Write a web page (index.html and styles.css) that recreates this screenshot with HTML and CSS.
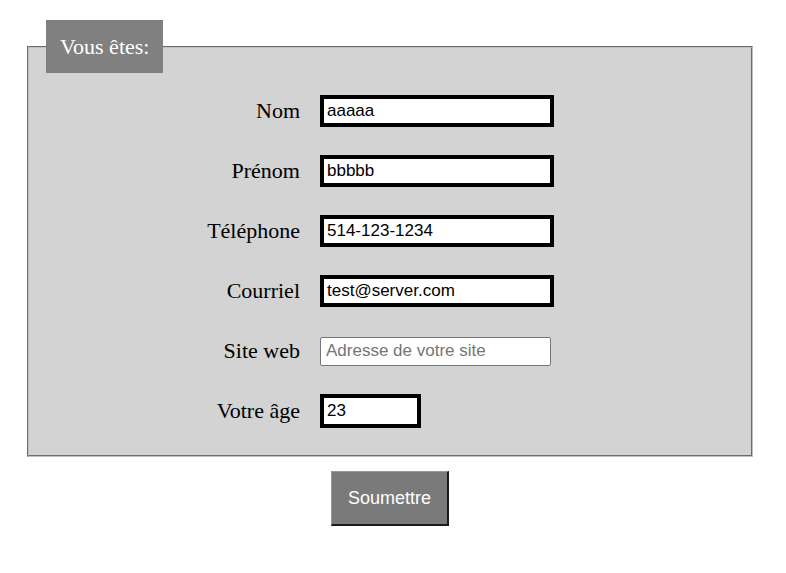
FILE: index.html
```html
<!DOCTYPE html>
<html lang="fr">
<head>
<meta charset="utf-8">
<title>Formulaire</title>
<link rel="stylesheet" href="styles.css">
</head>
<body>
<form class="form">
  <fieldset class="box">
    <legend class="legend">Vous êtes:</legend>
    <div class="grid">
      <label class="lbl" for="nom">Nom</label>
      <input class="field" id="nom" type="text" value="aaaaa">
      <label class="lbl" for="prenom">Prénom</label>
      <input class="field" id="prenom" type="text" value="bbbbb">
      <label class="lbl" for="tel">Téléphone</label>
      <input class="field" id="tel" type="text" value="514-123-1234">
      <label class="lbl" for="mail">Courriel</label>
      <input class="field" id="mail" type="text" value="test@server.com">
      <label class="lbl" for="site">Site web</label>
      <input class="field plain" id="site" type="text" placeholder="Adresse de votre site">
      <label class="lbl" for="age">Votre âge</label>
      <input class="field age" id="age" type="text" value="23">
    </div>
  </fieldset>
  <div class="actions">
    <button class="submit" type="button">Soumettre</button>
  </div>
</form>
</body>
</html>
```
FILE: styles.css
```css
body {
  margin: 8px;
  background: #ffffff;
  font-family: "Liberation Serif", "Times New Roman", serif;
}
.form {
  margin: 12px 0 0 19px;
  width: 726px;
}
.box {
  box-sizing: border-box;
  width: 726px;
  margin: 0;
  padding: 22px 0 28px 17px;
  background: #d3d3d3;
  border: 2px groove #c0c0c0;
}
.legend {
  background: #808080;
  color: #ffffff;
  font-size: 22px;
  line-height: 25px;
  padding: 14px 14px;
}
.grid {
  display: grid;
  grid-template-columns: 254px auto;
  grid-auto-rows: 32px;
  column-gap: 20px;
  row-gap: 28px;
  align-items: center;
  justify-items: start;
}
.lbl {
  justify-self: end;
  font-size: 22px;
  color: #000;
}
.field {
  box-sizing: border-box;
  width: 234px;
  height: 32px;
  border: 4px solid #000;
  padding: 0 3px;
  margin: 0;
  background: #fff;
  color: #000;
  font-family: "Liberation Sans", Arial, sans-serif;
  font-size: 17px;
  outline: none;
}
.plain {
  width: 231px;
  height: 29px;
  border: 1px solid #767676;
  border-radius: 2px;
  padding: 0 5px;
}
.plain::placeholder {
  color: #757575;
}
.age {
  width: 101px;
  height: 34px;
}
.actions {
  display: flex;
  justify-content: center;
  padding-top: 14px;
}
.submit {
  box-sizing: border-box;
  width: 118px;
  height: 55px;
  background: #7a7a7a;
  color: #ffffff;
  font-family: "Liberation Sans", Arial, sans-serif;
  font-size: 18px;
  border-style: solid;
  border-width: 1px 2px 2px 1px;
  border-color: #999 #1a1a1a #1a1a1a #999;
  padding: 0;
}
```
